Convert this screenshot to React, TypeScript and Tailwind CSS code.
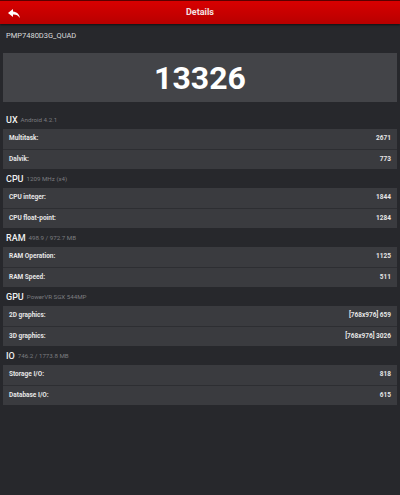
const SECTIONS = [
  {
    name: 'UX',
    sub: 'Android 4.2.1',
    rows: [
      ['Multitask:', '2671'],
      ['Dalvik:', '773'],
    ],
  },
  {
    name: 'CPU',
    sub: '1209 MHz (x4)',
    rows: [
      ['CPU integer:', '1844'],
      ['CPU float-point:', '1284'],
    ],
  },
  {
    name: 'RAM',
    sub: '498.9 / 972.7 MB',
    rows: [
      ['RAM Operation:', '1125'],
      ['RAM Speed:', '511'],
    ],
  },
  {
    name: 'GPU',
    sub: 'PowerVR SGX 544MP',
    rows: [
      ['2D graphics:', '[768x976] 659'],
      ['3D graphics:', '[768x976] 3026'],
    ],
  },
  {
    name: 'IO',
    sub: '746.2 / 1773.8 MB',
    rows: [
      ['Storage I/O:', '818'],
      ['Database I/O:', '615'],
    ],
  },
]

function BackIcon() {
  return (
    <svg width="12" height="9" viewBox="0 0 12 9" fill="white">
      <path d="M5 0 L0 4 L5 8 L5 5.6 C8 5.4 10 6.5 12 9 C11.4 5.2 9 2.8 5 2.4 Z" />
    </svg>
  )
}

export default function App() {
  return (
    <div
      className="h-[495px] w-[400px] overflow-hidden bg-[#27282c] text-white"
      style={{ fontFamily: 'Roboto, "Liberation Sans", sans-serif' }}
    >
      <div className="relative flex h-[24px] items-center justify-center border-t border-[#5a0000] bg-gradient-to-b from-[#d80000] to-[#b80000] shadow-[0_1px_2px_rgba(0,0,0,0.6)]">
        <div className="absolute left-[8px] top-[8px]">
          <BackIcon />
        </div>
        <span className="text-[9px] font-bold text-[#f4e4e4]">Details</span>
      </div>

      <div className="flex h-[29px] items-center pb-[6px] pl-[6px] text-[7.5px] text-[#dcdcdc]">PMP7480D3G_QUAD</div>

      <div className="mx-[3px] flex h-[49px] items-center justify-center bg-[#434448] pt-[1px] text-[32px] font-bold leading-none text-white">
        13326
      </div>

      <div className="mt-[8px]">
        {SECTIONS.map((s) => (
          <div key={s.name}>
            <div className="flex h-[19px] items-center gap-[3px] pl-[6px] pt-[2px]">
              <span className="text-[9px] font-medium leading-none text-[#f0f0f0]">{s.name}</span>
              <span className="text-[6.2px] leading-none text-[#7c7d80]">{s.sub}</span>
            </div>
            <div className="mx-[3px] bg-[#3a3b3f]">
              {s.rows.map(([label, value], i) => (
                <div
                  key={label}
                  className={`flex h-[20px] items-center justify-between px-[6px] text-[6.5px] font-bold text-[#e6e6e6] ${
                    i > 0 ? 'border-t border-[#2d2e32]' : ''
                  }`}
                >
                  <span>{label}</span>
                  <span>{value}</span>
                </div>
              ))}
            </div>
          </div>
        ))}
      </div>
    </div>
  )
}
